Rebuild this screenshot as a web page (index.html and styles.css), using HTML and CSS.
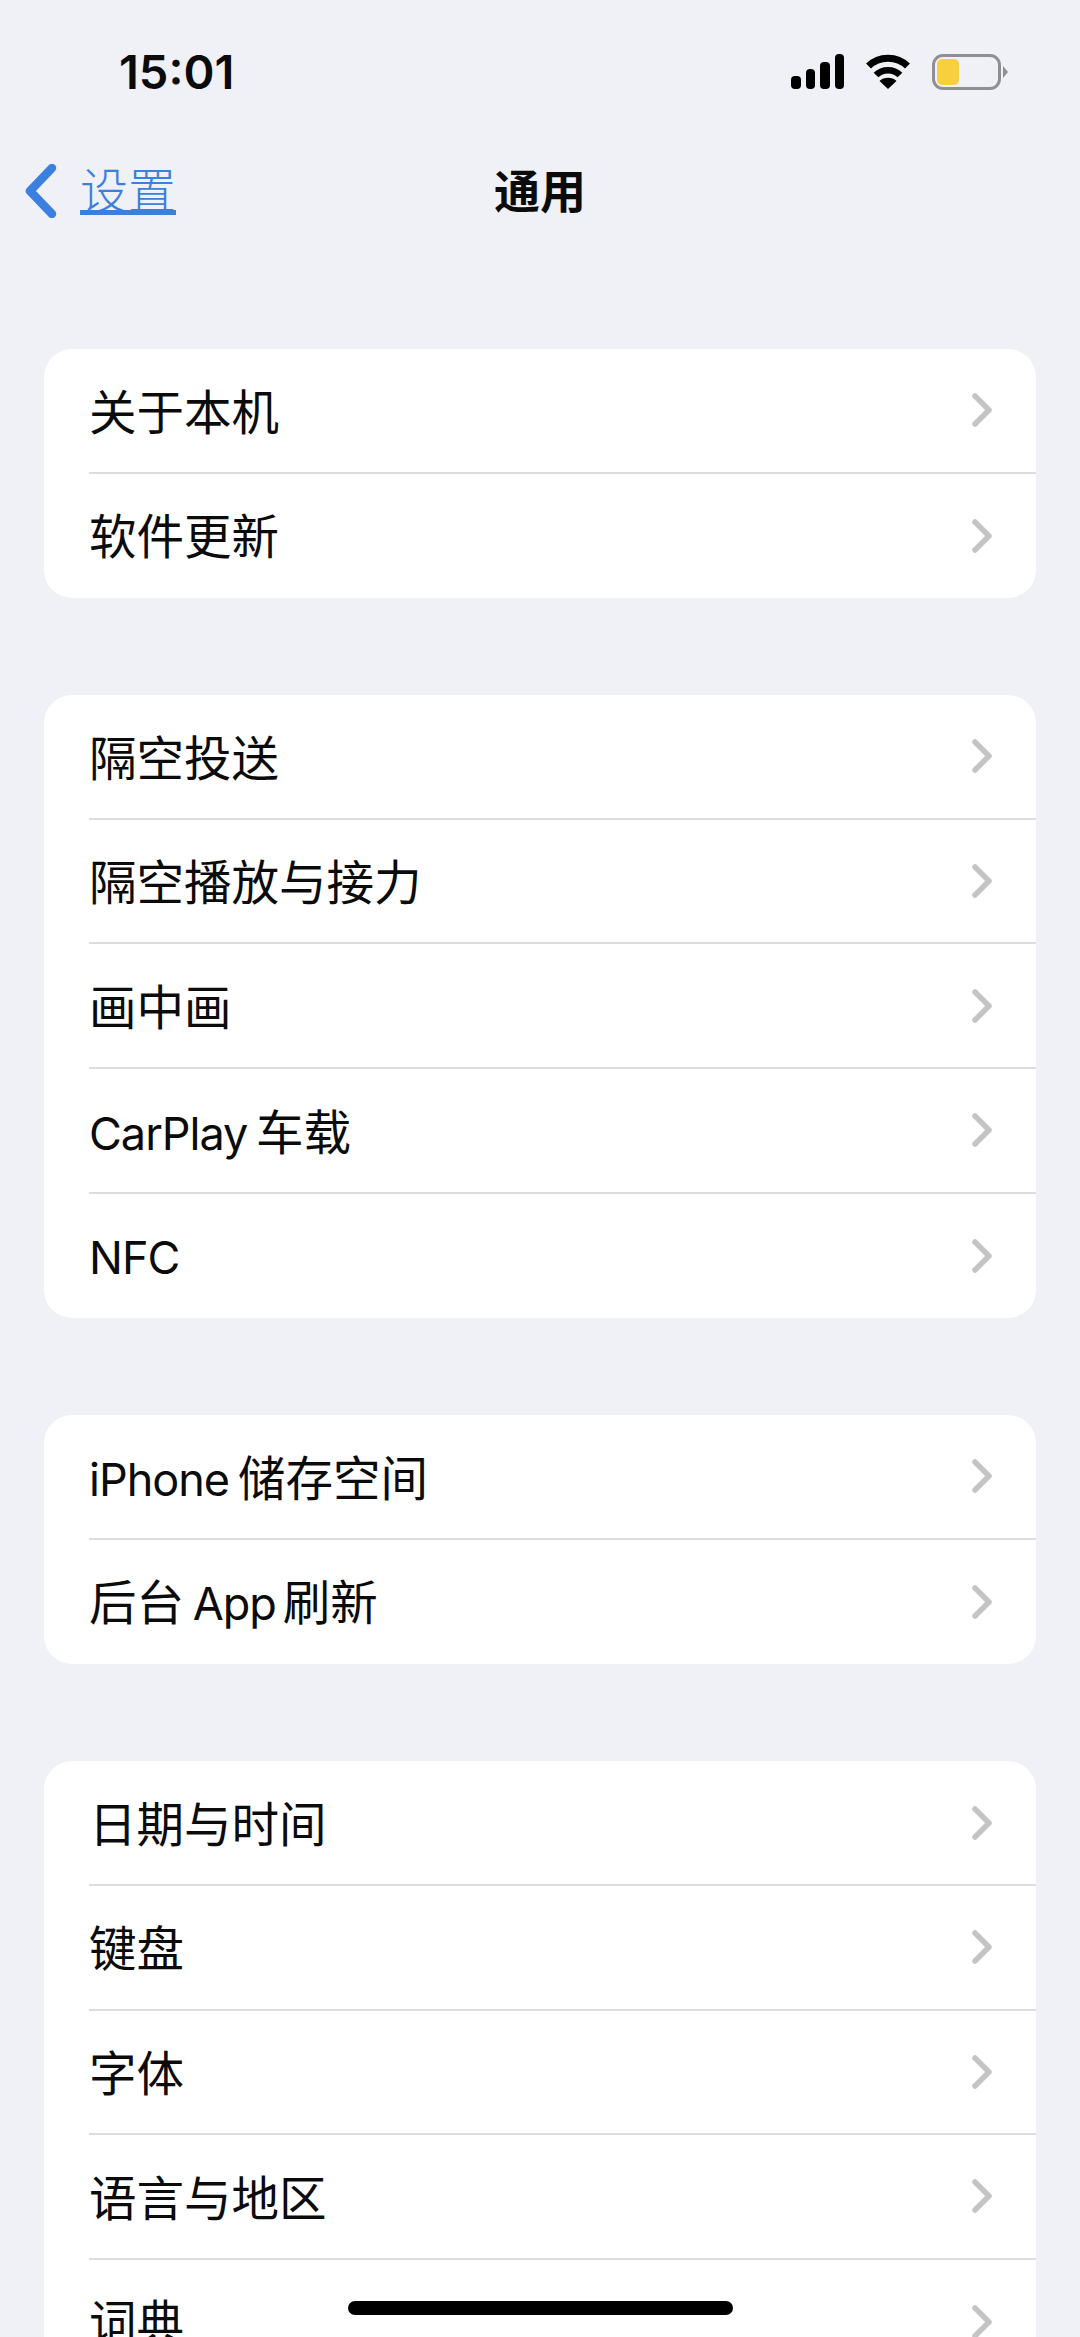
FILE: index.html
```html
<!DOCTYPE html>
<html lang="zh-CN">
<head>
  <meta charset="UTF-8">
  <meta name="viewport" content="width=device-width, initial-scale=1">
  <title>通用</title>
  <link rel="stylesheet" href="styles.css">
</head>
<body>
  <svg class="defs" width="0" height="0" aria-hidden="true">
    <symbol id="chevron" viewBox="0 0 20 34">
      <path d="M3 3 L17 17 L3 31" fill="none" stroke="currentColor" stroke-width="5.5" stroke-linecap="round" stroke-linejoin="round"/>
    </symbol>
  </svg>
  <div class="screen">
    <div class="status-bar">
      <span class="time">15:01</span>
      <div class="status-icons">
        <div class="signal">
          <span class="bar bar-1"></span>
          <span class="bar bar-2"></span>
          <span class="bar bar-3"></span>
          <span class="bar bar-4"></span>
        </div>
        <svg class="wifi" width="46" height="35" viewBox="0 0 46 35">
          <path d="M3.5 12 C14 1.500 32 1.500 42.500 12" fill="none" stroke="#000" stroke-width="7"/>
          <path d="M11 21 C17.500 14.500 28.500 14.500 35 21" fill="none" stroke="#000" stroke-width="6.500"/>
          <path d="M23 35 L14.500 27 C19 22.800 27 22.800 31.500 27 Z" fill="#000"/>
        </svg>
        <div class="battery">
          <div class="battery-body"><span class="battery-fill"></span></div>
          <span class="battery-cap"></span>
        </div>
      </div>
    </div>
    <div class="nav">
      <a class="back" href="#">
        <svg class="back-icon" width="32" height="54" viewBox="0 0 32 54">
          <path d="M27 4 L5 27 L27 50" fill="none" stroke="currentColor" stroke-width="8.500" stroke-linecap="round" stroke-linejoin="round"/>
        </svg>
        <span class="back-label">设置</span>
      </a>
      <h1 class="title">通用</h1>
    </div>
    <div class="groups">
      <div class="card">
        <div class="row"><span class="row-label">关于本机</span><svg class="chev"><use href="#chevron"/></svg></div>
        <div class="row"><span class="row-label">软件更新</span><svg class="chev"><use href="#chevron"/></svg></div>
      </div>
      <div class="card">
        <div class="row"><span class="row-label">隔空投送</span><svg class="chev"><use href="#chevron"/></svg></div>
        <div class="row"><span class="row-label">隔空播放与接力</span><svg class="chev"><use href="#chevron"/></svg></div>
        <div class="row"><span class="row-label">画中画</span><svg class="chev"><use href="#chevron"/></svg></div>
        <div class="row"><span class="row-label"><span class="latin">CarPlay </span>车载</span><svg class="chev"><use href="#chevron"/></svg></div>
        <div class="row"><span class="row-label"><span class="latin">NFC</span></span><svg class="chev"><use href="#chevron"/></svg></div>
      </div>
      <div class="card">
        <div class="row"><span class="row-label"><span class="latin latin-iphone">iPhone</span>储存空间</span><svg class="chev"><use href="#chevron"/></svg></div>
        <div class="row"><span class="row-label">后台<span class="latin latin-app"> App</span>刷新</span><svg class="chev"><use href="#chevron"/></svg></div>
      </div>
      <div class="card">
        <div class="row"><span class="row-label">日期与时间</span><svg class="chev"><use href="#chevron"/></svg></div>
        <div class="row"><span class="row-label">键盘</span><svg class="chev"><use href="#chevron"/></svg></div>
        <div class="row"><span class="row-label">字体</span><svg class="chev"><use href="#chevron"/></svg></div>
        <div class="row"><span class="row-label">语言与地区</span><svg class="chev"><use href="#chevron"/></svg></div>
        <div class="row"><span class="row-label">词典</span><svg class="chev"><use href="#chevron"/></svg></div>
      </div>
    </div>
    <div class="home-indicator"></div>
  </div>
</body>
</html>
```

FILE: styles.css
```css
:root {
  --bg-color: #f0f0f7;
  --text-color: #0b0b0c;
  --blue: #3b7fdf;
  --divider: #dddddf;
  --chevron: #c4c4c6;
}
*, *::before, *::after {
  box-sizing: border-box;
}
html, body {
  margin: 0;
  height: 100%;
}
body {
  font-family: Inter, "Noto Sans CJK SC", sans-serif;
  background: var(--bg-color);
  color: var(--text-color);
}
.defs {
  display: block;
  height: 0;
}
.screen {
  position: relative;
  width: 1080px;
  height: 2337px;
  overflow: hidden;
}
.status-bar {
  display: flex;
  justify-content: space-between;
  align-items: center;
  height: 143px;
  padding: 0 72px 0 119px;
}
.time {
  font-size: 47px;
  font-weight: 600;
  line-height: 1;
}
.status-icons {
  display: flex;
  align-items: center;
  gap: 21px;
}
.signal {
  display: flex;
  align-items: flex-end;
  gap: 5px;
  height: 35px;
}
.bar {
  width: 9.500px;
  background: #000;
  border-radius: 4px;
}
.bar-1 { height: 13px; }
.bar-2 { height: 20px; }
.bar-3 { height: 27px; }
.bar-4 { height: 35px; }
.battery {
  display: flex;
  align-items: center;
  gap: 2px;
}
.battery-body {
  width: 69px;
  height: 36px;
  padding: 2px;
  border: 3px solid #8f8f92;
  border-radius: 11px;
}
.battery-fill {
  display: block;
  width: 22px;
  height: 100%;
  background: #f8cf3c;
  border-radius: 5px;
}
.battery-cap {
  width: 0;
  height: 0;
  border-top: 6px solid transparent;
  border-bottom: 6px solid transparent;
  border-left: 5px solid #8f8f92;
}
.nav {
  display: grid;
  grid-template-columns: 1fr auto 1fr;
  align-items: center;
  height: 96px;
  padding: 0 25px;
}
.back {
  display: flex;
  align-items: center;
  gap: 23px;
  color: var(--blue);
}
.back-label {
  font-size: 48px;
  font-weight: 300;
  line-height: 1.1;
  text-decoration: underline;
  text-decoration-thickness: 3px;
  text-underline-offset: 2px;
}
.title {
  margin: 0;
  font-size: 46px;
  font-weight: 700;
  line-height: 1;
}
.groups {
  display: flex;
  flex-direction: column;
  gap: 97px;
  margin: 110px 44px 0;
}
.card {
  background: #fff;
  border-radius: 28px;
}
.row {
  display: flex;
  justify-content: space-between;
  align-items: center;
  height: 124.600px;
  margin-left: 45px;
  padding-right: 44px;
  font-size: 47.500px;
}
.row:not(:last-child) {
  border-bottom: 2px solid var(--divider);
}
.row-label {
  margin-top: 4px;
  line-height: 1;
}
.row:last-child .row-label {
  margin-top: 2px;
}
.latin {
  font-size: 45px;
  letter-spacing: -1px;
  word-spacing: -3px;
}
.latin-iphone {
  margin-right: 9px;
}
.latin-app {
  margin-right: 7px;
}
.chev {
  flex: none;
  width: 20px;
  height: 34px;
  color: var(--chevron);
}
.home-indicator {
  position: absolute;
  left: 348px;
  top: 2301px;
  width: 385px;
  height: 14px;
  background: #000;
  border-radius: 7px;
}
```
